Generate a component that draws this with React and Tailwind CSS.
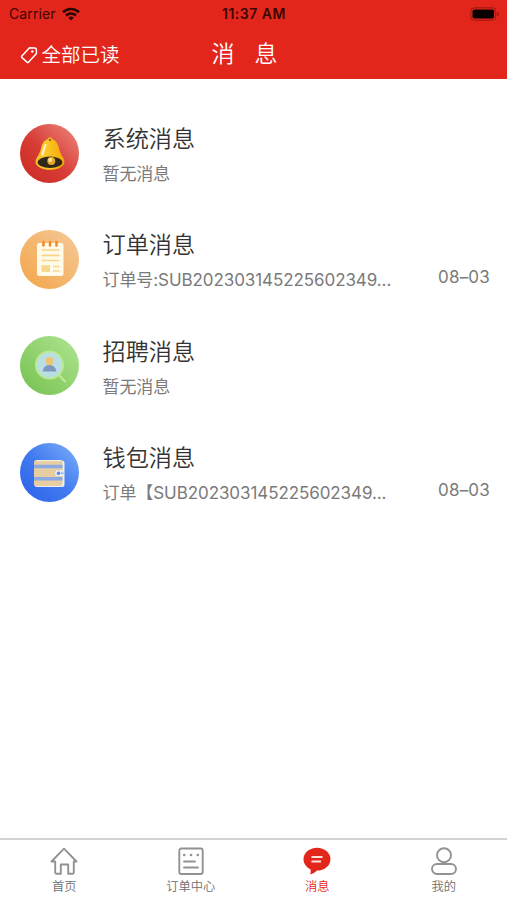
import clsx from "clsx";

function BellArt() {
  return (
    <svg viewBox="0 0 59 59" className="size-full">
      <defs>
        <linearGradient id="bellBg" x1="0" y1="1" x2="1" y2="0">
          <stop offset="0" stopColor="#cb2a24" />
          <stop offset="0.45" stopColor="#d63b34" />
          <stop offset="1" stopColor="#ee8a80" />
        </linearGradient>
        <linearGradient id="bellBody" x1="0" y1="0" x2="1" y2="0">
          <stop offset="0" stopColor="#f8bd22" />
          <stop offset="0.35" stopColor="#fbc92c" />
          <stop offset="1" stopColor="#f3a800" />
        </linearGradient>
      </defs>
      <circle cx="29.5" cy="29.5" r="29.5" fill="url(#bellBg)" />
      <circle cx="30" cy="15.5" r="2.3" fill="#f5b31a" />
      <path
        d="M30 15c-4.600 0-7.400 3.200-8.600 8-1.100 4.600-2.600 7.600-4.600 10.800-1.500 2.500-1.800 5-.4 7 2.200 3 7.600 5 13.600 5s11.400-2 13.500-5c1.400-2 1.100-4.500-.4-7-2-3.200-3.400-6.200-4.500-10.800-1.200-4.800-4-8-8.600-8z"
        fill="url(#bellBody)"
      />
      <ellipse cx="30" cy="38.300" rx="12.300" ry="5.700" fill="#30291a" />
      <circle cx="31.300" cy="37" r="4" fill="#e5a62c" />
      <circle cx="30.300" cy="36" r="2" fill="#fbe3a0" />
      <path d="M25.500 21c-1.500 3-1.800 6-3.200 9.500" stroke="#fff3c4" strokeWidth="2.200" strokeLinecap="round" fill="none" />
      <circle cx="30" cy="16" r="1" fill="#7a3a10" />
    </svg>
  );
}

function NoteArt() {
  return (
    <svg viewBox="0 0 59 59" className="size-full">
      <defs>
        <linearGradient id="noteBg" x1="0" y1="1" x2="1" y2="0">
          <stop offset="0" stopColor="#f3a548" />
          <stop offset="1" stopColor="#f5c999" />
        </linearGradient>
      </defs>
      <circle cx="29.5" cy="29.5" r="29.5" fill="url(#noteBg)" />
      <rect x="17" y="13" width="26.500" height="33" rx="2.500" fill="#fffbe8" />
      <path d="M23.500 12v3.500M30 12v3.500M36.500 12v3.500" stroke="#ee8a24" strokeWidth="2.500" strokeLinecap="round" />
      <path d="M21.500 20h18M21.500 25.300h18M21.500 30.500h18M33 36.500h6.500M33 41h6.500" stroke="#fad68a" strokeWidth="1.700" />
      <rect x="21.500" y="35.200" width="8.500" height="6.700" fill="#fad68a" />
    </svg>
  );
}

function RecruitArt() {
  return (
    <svg viewBox="0 0 59 59" className="size-full">
      <defs>
        <linearGradient id="recruitBg" x1="0" y1="1" x2="1" y2="0">
          <stop offset="0" stopColor="#74c04d" />
          <stop offset="1" stopColor="#b0e593" />
        </linearGradient>
      </defs>
      <circle cx="29.5" cy="29.5" r="29.5" fill="url(#recruitBg)" />
      <path d="M38.500 38.500l6.500 7" stroke="#c3ea93" strokeWidth="2" strokeLinecap="round" />
      <circle cx="29.500" cy="29" r="13.500" fill="#b9dfe6" stroke="#bde994" strokeWidth="2" />
      <path d="M22.700 35.500c.5-4.200 3-6.500 6.800-6.500s6.300 2.300 6.800 6.500z" fill="#7f98bd" />
      <circle cx="29.500" cy="25" r="4.200" fill="#ecc574" />
    </svg>
  );
}

function WalletArt() {
  return (
    <svg viewBox="0 0 59 59" className="size-full">
      <defs>
        <linearGradient id="walletBg" x1="0" y1="1" x2="1" y2="0">
          <stop offset="0" stopColor="#2b60ea" />
          <stop offset="0.5" stopColor="#427bef" />
          <stop offset="1" stopColor="#80b1fa" />
        </linearGradient>
      </defs>
      <circle cx="29.5" cy="29.5" r="29.5" fill="url(#walletBg)" />
      <rect x="14.500" y="17.500" width="30" height="26.500" rx="2.500" fill="#edf0f2" />
      <rect x="14" y="17" width="28.500" height="26" rx="2.500" fill="#e6cda2" />
      <path d="M14 21.700h28.500v3.500H14zM14 34h28.500v3.500H14z" fill="#8ca9e4" />
      <path d="M16 17.600h25" stroke="#f5ead2" strokeWidth="1.200" />
      <path d="M42.500 27.300h-4.500a2.900 2.900 0 0 0 0 5.800h4.500z" fill="#e8edf6" />
      <circle cx="38.500" cy="30.200" r="1.700" fill="#5588ec" />
      <path d="M41 30.200h2.500" stroke="#8ca9e4" strokeWidth="1.500" />
    </svg>
  );
}

const messages = [
  { title: "系统消息", text: "暂无消息", art: BellArt },
  { title: "订单消息", text: "订单号:SUB202303145225602349...", date: "08–03", art: NoteArt },
  { title: "招聘消息", text: "暂无消息", art: RecruitArt },
  { title: "钱包消息", text: "订单【SUB202303145225602349...", date: "08–03", art: WalletArt },
];

function HomeIcon() {
  return (
    <svg viewBox="0 0 28 28" className="size-7" fill="none" stroke="currentColor" strokeWidth="1.900" strokeLinejoin="round" strokeLinecap="round">
      <path d="M1.500 14.500L14 1.700l12.500 12.800h-2.700V25.500q0 1.200-1.200 1.200h-4.400V17.500h-7.400v9.200H6.400q-1.200 0-1.200-1.200V14.500z" />
    </svg>
  );
}

function OrderIcon() {
  return (
    <svg viewBox="0 0 28 28" className="size-7" fill="none" stroke="currentColor" strokeWidth="1.900" strokeLinecap="round">
      <rect x="2.300" y="1.500" width="23.400" height="25.500" rx="2" />
      <path d="M7.200 8h.1M14 8h.1M20.700 8h.1" strokeWidth="2.500" />
      <path d="M7 14.500h11M7 20.500h14" />
    </svg>
  );
}

function MessageIcon() {
  return (
    <svg viewBox="0 0 28 28" className="size-7">
      <path d="M14 .8C6.500.8.500 5.800.500 12.200c0 4.300 2.700 8 7 10 .4 1.800.3 3.500-.3 5.300 2.800-.7 5-2 6.800-3.900 7.500 0 13.500-5 13.500-11.400S21.500.8 14 .8z" fill="currentColor" />
      <path d="M8.500 10h11M8.500 14.500h9.500" stroke="#ffe1dc" strokeWidth="1.900" />
    </svg>
  );
}

function MineIcon() {
  return (
    <svg viewBox="0 0 28 28" className="size-7" fill="none" stroke="currentColor" strokeWidth="1.900">
      <circle cx="14" cy="8.200" r="7" />
      <rect x="2" y="17" width="24" height="10" rx="5" />
    </svg>
  );
}

const tabs = [
  { label: "首页", icon: HomeIcon },
  { label: "订单中心", icon: OrderIcon },
  { label: "消息", icon: MessageIcon, active: true },
  { label: "我的", icon: MineIcon },
];

function StatusBar() {
  return (
    <div className="grid h-7 grid-cols-3 items-center pl-[9px] pr-[7px] text-[14px] text-[#3a0703]">
      <div className="flex items-center gap-[6px]">
        <span className="pb-px tracking-[0.100px]">Carrier</span>
        <svg viewBox="0 0 18 14" className="mb-px h-[14px] w-[18px]" fill="none" stroke="#2c0502" strokeWidth="2.600">
          <path d="M1 5.200a11.500 11.500 0 0 1 16 0" />
          <path d="M4 8.500a7.200 7.200 0 0 1 10 0" />
          <path d="M9 13.500L6.300 10.800a3.900 3.900 0 0 1 5.400 0z" fill="#2c0502" stroke="none" />
        </svg>
      </div>
      <span className="pb-px pr-px text-center font-semibold tracking-[0.500px]">11:37 AM</span>
      <svg viewBox="0 0 30 14" className="mb-px h-[14px] w-[30px] justify-self-end">
        <rect x="0.800" y="0.800" width="25" height="12.400" rx="3.500" fill="none" stroke="#9c1712" />
        <rect x="2.500" y="2.500" width="21.600" height="9" rx="2" fill="#080000" />
        <path d="M27.300 4.800v4.400c1.200-.4 1.700-1.200 1.700-2.200s-.5-1.800-1.700-2.200z" fill="#9c1712" />
      </svg>
    </div>
  );
}

function MessageRow({ title, text, date, art: Art }) {
  return (
    <li className="flex h-[106.300px] items-center pl-5 pr-[17px]">
      <div className="size-[59px] shrink-0">
        <Art />
      </div>
      <div className="ml-[23.500px] flex-1 pt-[5px]">
        <h2 className="text-[23.200px] leading-[34px] font-[350] text-[#333]">{title}</h2>
        <p className="whitespace-nowrap pt-[3px] text-[17px] leading-[30px] tracking-[-0.080px] text-[#7a7a7a]">{text}</p>
      </div>
      {date && <time className="pt-[35px] text-[17px] leading-[26px] tracking-[0.200px] text-[#7a7a7a]">{date}</time>}
    </li>
  );
}

export default function App() {
  return (
    <div className="flex h-[900px] w-full flex-col bg-white font-[Inter,'Noto_Sans_CJK_SC',sans-serif]">
      <header className="h-[79px] bg-[#e3261c]">
        <StatusBar />
        <div className="grid h-[51px] grid-cols-3 items-center pl-5 pr-[38px] text-white">
          <button type="button" className="flex items-center gap-[3.500px] whitespace-nowrap pt-[5px] text-[19.500px] font-[350]">
            <svg viewBox="0 0 18 18" className="mb-[3px] size-[18px]" fill="none" stroke="#fff" strokeWidth="1.500" strokeLinejoin="round">
              <path d="M9.500 1.700l5.400.2q1.300.1 1.400 1.400l.2 4.200-7.800 8.600q-.8.800-1.700 0l-5-4.500q-.9-.8-.1-1.700z" />
              <circle cx="12.300" cy="5.500" r="1.200" fill="#fff" stroke="none" />
            </svg>
            全部已读
          </button>
          <h1 className="flex gap-5 justify-self-center text-[23px] leading-[34px] font-[350]">
            <span>消</span>
            <span>息</span>
          </h1>
        </div>
      </header>

      <ul className="flex-1 pt-[21px]">
        {messages.map((m) => (
          <MessageRow key={m.title} {...m} />
        ))}
      </ul>

      <nav className="grid h-[62px] grid-cols-4 border-t-2 border-[#d2d2d2] pt-[7px] pl-px">
        {tabs.map(({ label, icon: Icon, active }) => (
          <button
            key={label}
            type="button"
            className={clsx("flex flex-col items-center", active ? "text-[#e3261c]" : "text-[#929292]")}
          >
            <Icon />
            <span className={clsx("pt-[2px] text-[12.300px] leading-[20px] font-[350]", !active && "text-[#707070]")}>{label}</span>
          </button>
        ))}
      </nav>
    </div>
  );
}
